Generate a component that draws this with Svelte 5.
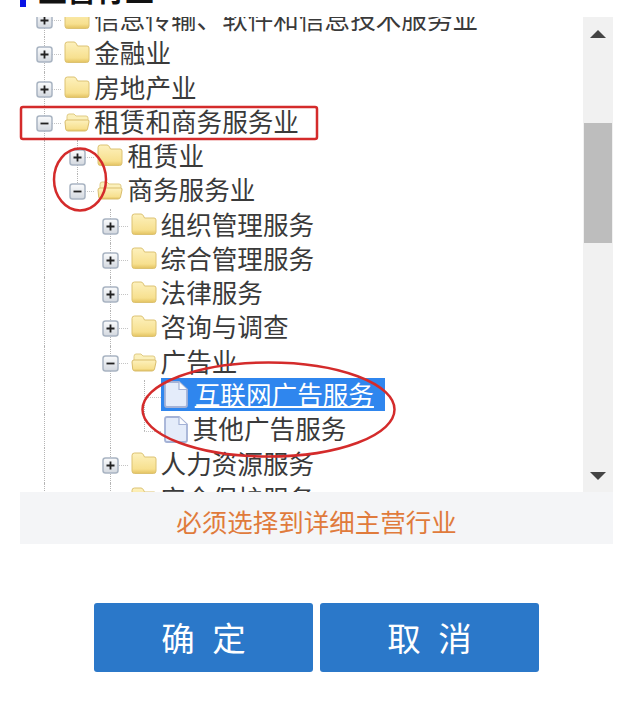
<script>
  const rows = [
    { level: 0, kind: "plus", label: "信息传输、软件和信息技术服务业", guides: [] },
    { level: 0, kind: "plus", label: "金融业", guides: [] },
    { level: 0, kind: "plus", label: "房地产业", guides: [] },
    { level: 0, kind: "minus", label: "租赁和商务服务业", guides: [] },
    { level: 1, kind: "plus", label: "租赁业", guides: [0] },
    { level: 1, kind: "minus", label: "商务服务业", guides: [0], last: true },
    { level: 2, kind: "plus", label: "组织管理服务", guides: [0] },
    { level: 2, kind: "plus", label: "综合管理服务", guides: [0] },
    { level: 2, kind: "plus", label: "法律服务", guides: [0] },
    { level: 2, kind: "plus", label: "咨询与调查", guides: [0] },
    { level: 2, kind: "minus", label: "广告业", guides: [0] },
    { level: 3, kind: "leaf", label: "互联网广告服务", guides: [0, 2], selected: true },
    { level: 3, kind: "leaf", label: "其他广告服务", guides: [0, 2], last: true },
    { level: 2, kind: "plus", label: "人力资源服务", guides: [0] },
    { level: 2, kind: "plus", label: "安全保护服务", guides: [0] }
  ];
  const levels = [0, 1, 2, 3];
</script>

{#snippet folder(open)}
  <svg class="icon" width="26" height="24" viewBox="0 0 26 24">
    {#if open}
      <path d="M3 7.5 Q3 5 5 5 H10 L12 7 H22 Q24 7 24 9 V12 H3 Z" fill="#fbf0bb" stroke="#e0cb85" />
      <path d="M1 13 Q1 11 3 11 H23.5 Q25.5 11 25 13 L23.5 20 Q23 22 21 22 H4 Q2 22 1.7 20 Z" fill="url(#fold)" stroke="#d9bd6c" />
    {:else}
      <path d="M1 4.5 Q1 2 3.5 2 H10 Q11.5 2 12.5 4 L13.5 6 H23 Q25 6 25 8 V20 Q25 22.5 22.5 22.5 H3.5 Q1 22.5 1 20 Z" fill="url(#fold)" stroke="#dcc272" />
    {/if}
  </svg>
{/snippet}

{#snippet expander(kind)}
  <svg class="exp" width="17" height="17" viewBox="0 0 17 17">
    <rect x="1" y="1" width="15" height="15" rx="2.5" fill="url(#box)" stroke="#a9b4c2" stroke-width="1.5" />
    <path d={kind === "plus" ? "M4.5 8.5 H12.5 M8.5 4.5 V12.5" : "M4.5 8.5 H12.5"} stroke="#222" stroke-width="1.8" />
  </svg>
{/snippet}

{#snippet page()}
  <svg class="icon" width="25" height="27" viewBox="0 0 25 27">
    <path d="M2 3 Q2 1 4 1 H16 L24 8.5 V24 Q24 26 22 26 H4 Q2 26 2 24 Z" fill="#e4ecfa" stroke="#a4b2d6" stroke-width="1.8" />
    <path d="M16 1 V8.5 H24" fill="#fbfcff" stroke="#a4b2d6" stroke-width="1.2" />
  </svg>
{/snippet}

<div class="page">
  <header class="title">
    <span class="mark"></span>
    <h2>主营行业</h2>
  </header>

  <div class="tree-box">
    <div class="tree">
      <ul>
        {#each rows as row}
          <li class="row">
            {#each levels.slice(0, row.level) as l}
              <span class="cell" class:guide={row.guides.includes(l)}></span>
            {/each}
            {#if row.kind === "leaf"}
              <span class="cell stub" class:half={row.last}></span>
              <span class="leaf" class:selected={row.selected}>
                {@render page()}
                <span class="label">{row.label}</span>
              </span>
            {:else}
              <span class="cell guide" class:half={row.last}>
                <span class="dash"></span>
                {@render expander(row.kind)}
              </span>
              {@render folder(row.kind === "minus")}
              <span class="label">{row.label}</span>
            {/if}
          </li>
        {/each}
      </ul>
    </div>
    <div class="scrollbar">
      <span class="arrow up"></span>
      <span class="thumb"></span>
      <span class="arrow down"></span>
    </div>
  </div>

  <p class="notice">必须选择到详细主营行业</p>

  <div class="actions">
    <button>确 定</button>
    <button>取 消</button>
  </div>

  <svg class="marks" width="640" height="709" viewBox="0 0 640 709">
    <defs>
      <linearGradient id="fold" x1="0" y1="0" x2="0" y2="1">
        <stop offset="0" stop-color="#fdf1bd" />
        <stop offset="0.78" stop-color="#f7e08f" />
        <stop offset="1" stop-color="#e3c260" />
      </linearGradient>
      <linearGradient id="box" x1="0" y1="0" x2="0" y2="1">
        <stop offset="0" stop-color="#fbfcfd" />
        <stop offset="1" stop-color="#d3d8df" />
      </linearGradient>
    </defs>
    <rect x="21" y="107" width="296" height="32" rx="2" fill="none" stroke="#d42b2b" stroke-width="2.5" />
    <ellipse cx="80" cy="179.5" rx="26" ry="31" fill="none" stroke="#d42b2b" stroke-width="2.5" />
    <ellipse cx="268.5" cy="409.5" rx="126" ry="47" fill="none" stroke="#d42b2b" stroke-width="2.5" />
  </svg>
</div>

<style>
  :global(body) {
    background: #fff;
  }

  .page {
    position: relative;
    width: 640px;
    height: 709px;
    overflow: hidden;
    font-family: "Noto Sans CJK SC", "Liberation Sans", sans-serif;
    color: #333;
  }

  .title {
    display: flex;
    align-items: flex-start;
    gap: 12px;
    height: 17px;
    padding-left: 20px;
  }

  .mark {
    flex: none;
    width: 6px;
    height: 7px;
    background: #0a14e6;
  }

  .title h2 {
    margin: -31px 0 0;
    font-size: 29px;
    line-height: 40px;
    font-weight: 700;
    color: #111;
  }

  .tree-box {
    display: flex;
    height: 475px;
    margin: 0 27px 0 20px;
  }

  .tree {
    flex: 1;
    overflow: hidden;
  }

  ul {
    list-style: none;
    margin: -14px 0 0;
    padding: 0 0 0 8px;
  }

  .row {
    display: flex;
    align-items: center;
    height: 34.25px;
    white-space: nowrap;
  }

  .cell {
    position: relative;
    flex: none;
    display: flex;
    align-items: center;
    justify-content: center;
    width: 33.2px;
    height: 100%;
  }

  .guide::before,
  .stub::before {
    content: "";
    position: absolute;
    left: 16px;
    top: 0;
    bottom: 0;
    border-left: 1px dotted #b5b5b5;
  }

  .half::before {
    bottom: 50%;
  }

  .stub::after,
  .dash {
    content: "";
    position: absolute;
    left: 16px;
    right: 0;
    top: 50%;
    border-top: 1px dotted #c4c4c4;
  }

  .exp {
    position: relative;
    display: block;
    margin-top: 1px;
  }

  .icon {
    flex: none;
    display: block;
    margin: 0 4px 4px 3px;
  }

  .label {
    font-size: 25.6px;
    line-height: 34px;
    color: #3a3a3a;
    margin-bottom: 4px;
  }

  .leaf {
    display: flex;
    align-items: center;
    height: 33px;
    padding-right: 11px;
    margin-bottom: 4px;
  }

  .leaf .icon {
    margin: 0 5px 0 2px;
  }

  .leaf .label {
    margin-bottom: 2px;
  }

  .leaf.selected {
    background: #2f86ee;
  }

  .leaf.selected .label {
    margin-left: 2px;
    color: #fff;
    text-decoration: underline;
    text-decoration-thickness: 2px;
  }

  .scrollbar {
    position: relative;
    flex: none;
    width: 30px;
    background: #f1f1f1;
  }

  .thumb {
    position: absolute;
    left: 1px;
    right: 1px;
    top: 106px;
    height: 120px;
    background: #bdbdbd;
  }

  .arrow {
    position: absolute;
    left: 7px;
    border-left: 8px solid transparent;
    border-right: 8px solid transparent;
  }

  .up {
    top: 13px;
    border-bottom: 8px solid #444;
  }

  .down {
    bottom: 13px;
    border-top: 8px solid #444;
    transform: translateY(1px);
  }

  .notice {
    margin: 0 27px 0 20px;
    height: 52px;
    background: #f4f5f7;
    color: #e07b3c;
    font-size: 25.5px;
    line-height: 58px;
    text-align: center;
    white-space: nowrap;
  }

  .actions {
    display: flex;
    justify-content: flex-start;
    gap: 7px;
    margin: 59px 0 0 94px;
  }

  button {
    width: 219px;
    height: 69px;
    border: none;
    border-radius: 3px;
    background: #2b78c9;
    color: #fff;
    font-family: inherit;
    font-size: 33.5px;
    word-spacing: 10px;
    padding: 0 0 2px;
  }

  .marks {
    position: absolute;
    left: 0;
    top: 0;
    pointer-events: none;
  }
</style>
